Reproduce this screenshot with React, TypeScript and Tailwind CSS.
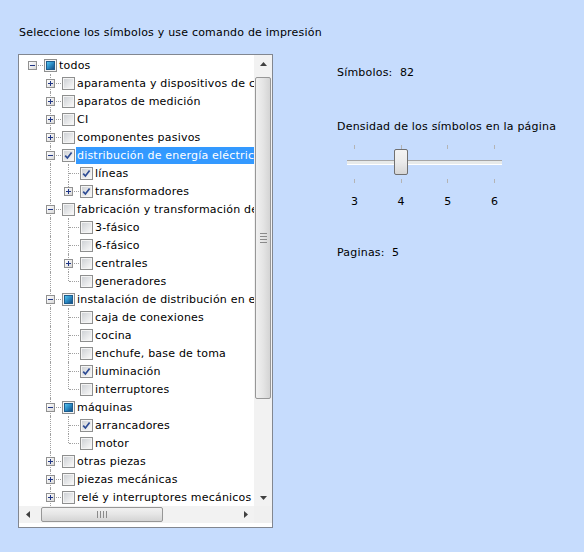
import React from "react"

type Node = {
  label: string
  level: number
  state: "none" | "checked" | "partial"
  exp?: "plus" | "minus"
  last?: boolean
  selected?: boolean
  guides?: boolean[]
}

// guides: for each ancestor level, whether a vertical line passes through
const rows: Node[] = [
  { label: "todos", level: 0, state: "partial", exp: "minus", last: true, guides: [] },
  { label: "aparamenta y dispositivos de conmutación", level: 1, state: "none", exp: "plus", guides: [false] },
  { label: "aparatos de medición", level: 1, state: "none", exp: "plus", guides: [false] },
  { label: "CI", level: 1, state: "none", exp: "plus", guides: [false] },
  { label: "componentes pasivos", level: 1, state: "none", exp: "plus", guides: [false] },
  { label: "distribución de energía eléctrica", level: 1, state: "checked", exp: "minus", selected: true, guides: [false] },
  { label: "líneas", level: 2, state: "checked", guides: [false, true] },
  { label: "transformadores", level: 2, state: "checked", exp: "plus", last: true, guides: [false, true] },
  { label: "fabricación y transformación de energía", level: 1, state: "none", exp: "minus", guides: [false] },
  { label: "3-fásico", level: 2, state: "none", guides: [false, true] },
  { label: "6-fásico", level: 2, state: "none", guides: [false, true] },
  { label: "centrales", level: 2, state: "none", exp: "plus", guides: [false, true] },
  { label: "generadores", level: 2, state: "none", last: true, guides: [false, true] },
  { label: "instalación de distribución en edificios", level: 1, state: "partial", exp: "minus", guides: [false] },
  { label: "caja de conexiones", level: 2, state: "none", guides: [false, true] },
  { label: "cocina", level: 2, state: "none", guides: [false, true] },
  { label: "enchufe, base de toma", level: 2, state: "none", guides: [false, true] },
  { label: "iluminación", level: 2, state: "checked", guides: [false, true] },
  { label: "interruptores", level: 2, state: "none", last: true, guides: [false, true] },
  { label: "máquinas", level: 1, state: "partial", exp: "minus", guides: [false] },
  { label: "arrancadores", level: 2, state: "checked", guides: [false, true] },
  { label: "motor", level: 2, state: "none", last: true, guides: [false, true] },
  { label: "otras piezas", level: 1, state: "none", exp: "plus", guides: [false] },
  { label: "piezas mecánicas", level: 1, state: "none", exp: "plus", guides: [false] },
  { label: "relé y interruptores mecánicos", level: 1, state: "none", exp: "plus", guides: [false] },
]

function Checkbox({ state }: { state: Node["state"] }) {
  return (
    <span className="relative block w-[13px] h-[13px] shrink-0 border border-[#8e8f8f] bg-[#f4f4f4] p-px">
      <span className="block w-full h-full bg-gradient-to-br from-[#cfd2d6] to-[#f8f8f8]">
        {state === "partial" && (
          <span className="block w-full h-full bg-gradient-to-br from-[#55c3ee] via-[#2a8bc4] to-[#174f86] border border-[#1e5c8c]" />
        )}
      </span>
      {state === "checked" && (
        <svg className="absolute left-0 top-0" width="11" height="11" viewBox="0 0 11 11">
          <path d="M2.2 5.6 L4.4 8 L8.6 2.4" fill="none" stroke="#2d4b94" strokeWidth="1.7" />
        </svg>
      )}
    </span>
  )
}

function Expander({ kind }: { kind: "plus" | "minus" }) {
  return (
    <span className="absolute left-[5px] top-[5px] w-[9px] h-[9px] border border-[#919191] bg-gradient-to-br from-white to-[#d9d9d9] flex items-center justify-center">
      <span className="absolute left-[1px] top-[3px] w-[5px] h-px bg-[#1f3585]" />
      {kind === "plus" && <span className="absolute left-[3px] top-[1px] w-px h-[5px] bg-[#1f3585]" />}
    </span>
  )
}

function Row({ n }: { n: Node }) {
  return (
    <div className="flex items-center h-[18px] whitespace-nowrap">
      {n.guides!.map((g, i) => (
        <span key={i} className="relative w-[18px] h-[18px] shrink-0">
          {g && <span className="absolute left-[9px] top-0 h-[18px] border-l border-dotted border-[#a0a0a0]" />}
        </span>
      ))}
      <span className="relative w-[18px] h-[18px] shrink-0">
        {n.level > 0 && (
          <span className={`absolute left-[9px] top-0 border-l border-dotted border-[#a0a0a0] ${n.last ? "h-[9px]" : "h-[18px]"}`} />
        )}
        <span className="absolute left-[10px] top-[9px] w-[10px] border-t border-dotted border-[#a0a0a0]" />
        {n.exp && <Expander kind={n.exp} />}
      </span>
      <span className="ml-[3px]">
        <Checkbox state={n.state} />
      </span>
      <span
        className={`ml-[1px] pl-px pr-[2px] h-[17px] leading-[17px] ${
          n.selected ? "bg-[#3399ff] text-white" : "text-black"
        }`}
      >
        {n.label}
      </span>
    </div>
  )
}

function Tri({ dir }: { dir: "up" | "down" | "left" | "right" }) {
  const pts = {
    up: "0,4 7,4 3.5,0",
    down: "0,0 7,0 3.5,4",
    left: "4,0 4,7 0,3.5",
    right: "0,0 0,7 4,3.5",
  }[dir]
  const w = dir === "up" || dir === "down" ? 7 : 4
  const h = dir === "up" || dir === "down" ? 4 : 7
  return (
    <svg width={w} height={h} viewBox={`0 0 ${w} ${h}`}>
      <polygon points={pts} fill="#404040" />
    </svg>
  )
}

function Tree() {
  return (
    <div className="w-[255px] h-[474px] border border-[#828790] bg-white flex flex-col">
      <div className="flex h-[451px]">
        <div className="w-[235px] overflow-hidden pt-px pl-[4px]">
          {rows.map((n, i) => (
            <Row key={i} n={n} />
          ))}
        </div>
        <div className="w-[18px] flex flex-col bg-[#f2f2f2]">
          <div className="h-[17px] flex items-center justify-center">
            <Tri dir="up" />
          </div>
          <div className="flex-1 flex flex-col px-px">
            <div className="mt-[5px] h-[322px] rounded-[2px] border border-[#979797] bg-gradient-to-r from-[#f1f1f1] via-[#e5e5e5] to-[#d4d4d4] flex flex-col items-center justify-center gap-[2px]">
              <span className="w-[7px] h-px bg-[#8a8a8a]" />
              <span className="w-[7px] h-px bg-[#8a8a8a]" />
              <span className="w-[7px] h-px bg-[#8a8a8a]" />
              <span className="w-[7px] h-px bg-[#8a8a8a]" />
            </div>
          </div>
          <div className="h-[17px] flex items-center justify-center">
            <Tri dir="down" />
          </div>
        </div>
      </div>
      <div className="flex h-[17px]">
        <div className="w-[235px] flex bg-[#f2f2f2]">
          <div className="w-[17px] flex items-center justify-center">
            <Tri dir="left" />
          </div>
          <div className="flex-1 flex py-px">
            <div className="ml-[5px] w-[122px] rounded-[2px] border border-[#979797] bg-gradient-to-b from-[#f1f1f1] via-[#e5e5e5] to-[#d4d4d4] flex items-center justify-center gap-[2px]">
              <span className="w-px h-[7px] bg-[#8a8a8a]" />
              <span className="w-px h-[7px] bg-[#8a8a8a]" />
              <span className="w-px h-[7px] bg-[#8a8a8a]" />
              <span className="w-px h-[7px] bg-[#8a8a8a]" />
            </div>
          </div>
          <div className="w-[17px] flex items-center justify-center">
            <Tri dir="right" />
          </div>
        </div>
        <div className="w-[18px] bg-[#f0f0f0]" />
      </div>
    </div>
  )
}

function Slider() {
  const ticks = ["3", "4", "5", "6"]
  return (
    <div className="relative w-[170px] h-[70px] mt-[11px]">
      {ticks.map((t, i) => (
        <React.Fragment key={t}>
          <span className="absolute top-0 w-px h-[4px] bg-[#b4b4b4]" style={{ left: 17 + i * 46.7 }} />
          <span className="absolute top-[34px] w-px h-[4px] bg-[#b4b4b4]" style={{ left: 17 + i * 46.7 }} />
          <span className="absolute top-[50px] w-[20px] -ml-[10px] text-center leading-[14px]" style={{ left: 17.5 + i * 46.7 }}>
            {t}
          </span>
        </React.Fragment>
      ))}
      <div className="absolute left-[10px] top-[15px] w-[155px] h-[5px] border-t border-[#a6a6a6] border-b border-b-white bg-[#e7eaea]" />
      <div className="absolute left-[57px] top-[4px] w-[14px] h-[26px] rounded-[2px] border border-[#707070] bg-gradient-to-b from-[#f3f3f3] via-[#ebebeb] to-[#d6d6d6]" />
    </div>
  )
}

export default function App() {
  return (
    <div
      className="w-[584px] h-[552px] bg-[#c6dcfd] text-[11px] tracking-[0.2px] text-black overflow-hidden"
      style={{ fontFamily: "'DejaVu Sans', sans-serif" }}
    >
      <div className="pt-[26px] pl-[19px] h-[54px] leading-[14px]">
        Seleccione los símbolos y use comando de impresión
      </div>
      <div className="flex">
        <div className="ml-[18px]">
          <Tree />
        </div>
        <div className="ml-[64px] flex flex-col leading-[14px]">
          <div className="mt-[12px] whitespace-pre">Símbolos:  82</div>
          <div className="mt-[40px]">Densidad de los símbolos en la página</div>
          <Slider />
          <div className="mt-[31px] whitespace-pre">Paginas:  5</div>
        </div>
      </div>
    </div>
  )
}
